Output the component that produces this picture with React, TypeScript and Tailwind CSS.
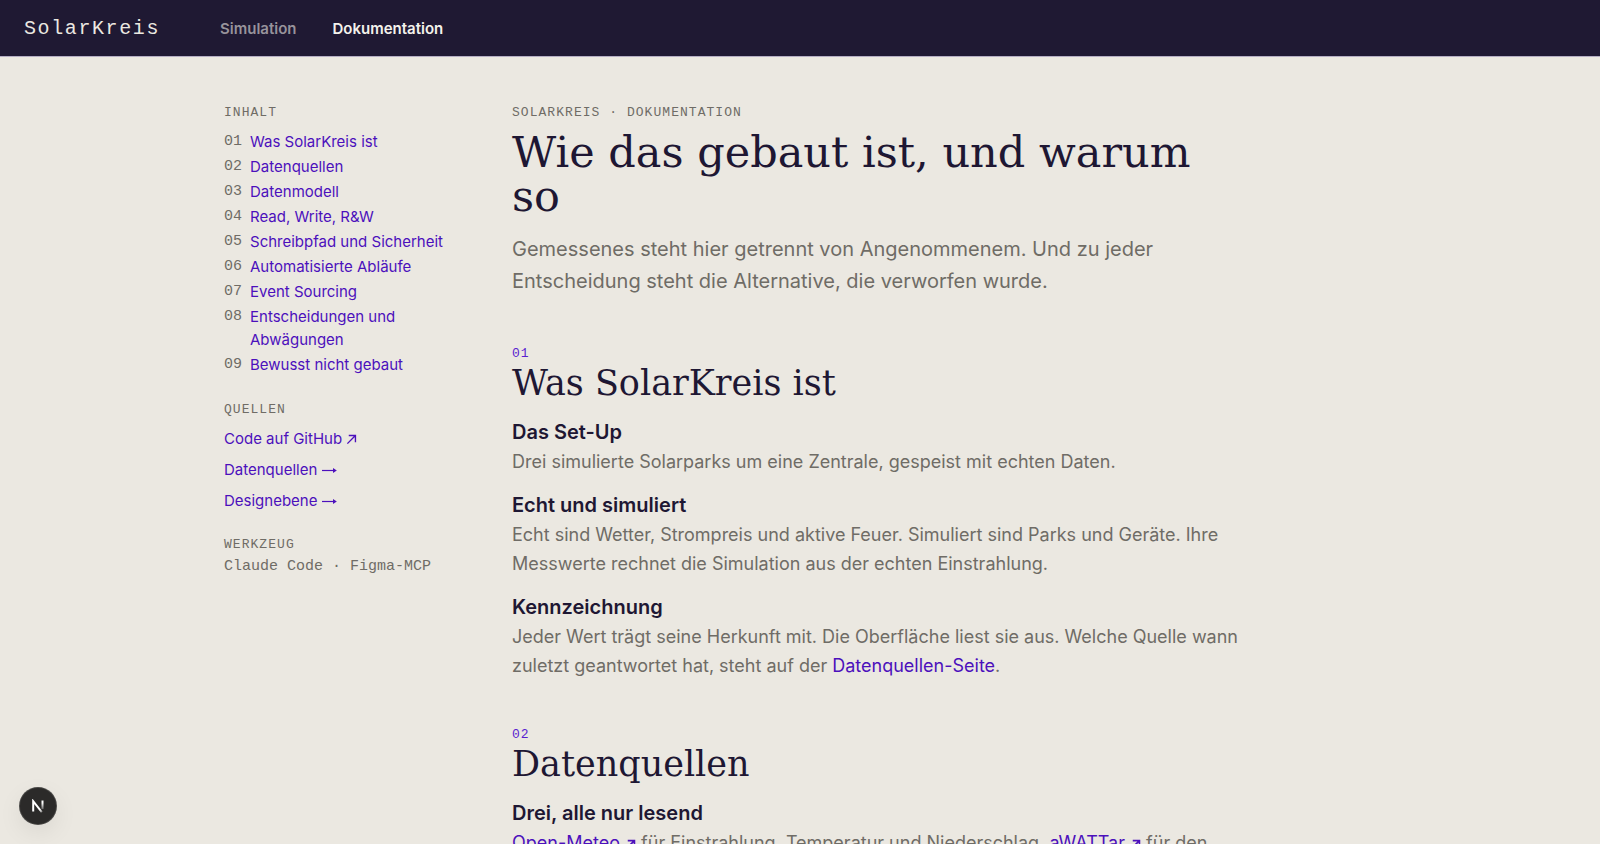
import React from 'react';

const sans = "font-['Inter','Liberation_Sans',sans-serif]";
const mono = "font-['Liberation_Mono',monospace]";
const serif = "font-['DejaVu_Serif',serif]";

const toc = [
  'Was SolarKreis ist',
  'Datenquellen',
  'Datenmodell',
  'Read, Write, R&W',
  'Schreibpfad und Sicherheit',
  'Automatisierte Abläufe',
  'Event Sourcing',
  'Entscheidungen und Abwägungen',
  'Bewusst nicht gebaut',
];

const pad = (n: number) => String(n).padStart(2, '0');

const ArrowUpRight = ({ bold = false }: { bold?: boolean }) => (
  <svg viewBox="0 0 12 12" className="inline-block w-[11px] h-[11px]" fill="none" stroke="currentColor" strokeWidth={bold ? 1.8 : 1.5} aria-hidden="true">
    <path d="M1.5 10.5 10 2M3 1.7h7.3V9" />
  </svg>
);

const ArrowRight = () => (
  <svg viewBox="0 0 15 10" className="inline-block w-[15px] h-[10px]" fill="none" stroke="currentColor" strokeWidth="1.2" aria-hidden="true">
    <path d="M0 4.5H13" />
    <path d="M11 2 14.8 4.5 11 7z" fill="currentColor" stroke="none" />
  </svg>
);

const Label = ({ children }: { children: React.ReactNode }) => (
  <p className={`${mono} text-[13px] leading-5 tracking-[0.08em] uppercase text-[#6f6c66]`}>{children}</p>
);

const Section = ({ no, title, children }: { no: number; title: string; children: React.ReactNode }) => (
  <section id={`s${pad(no)}`} className="mt-[45px]">
    <p className={`${mono} text-[13px] leading-5 tracking-[0.08em] text-[#5a1fd0]`}>{pad(no)}</p>
    <h2 className={`${serif} text-[35px] leading-[39px] text-[#1e1733]`}>{title}</h2>
    {children}
  </section>
);

const Block = ({ title, children }: { title: string; children: React.ReactNode }) => (
  <div className="mt-[15px]">
    <h3 className="text-xl leading-7 font-semibold text-[#1e1733]">{title}</h3>
    <p className="mt-px text-lg leading-[29px] text-[#6f6c66]">{children}</p>
  </div>
);

const A = ({ href, children }: { href: string; children: React.ReactNode }) => (
  <a href={href} className="text-[#4c10bc] hover:underline">{children}</a>
);

const App: React.FC = () => {
  return (
    <div className={`${sans} min-h-screen bg-[#ebe8e1] text-[#1e1733]`}>

      {/* Header */}
      <header className="flex items-center gap-15 h-[57px] px-6 pt-0.5 bg-[#1f1933] border-b border-[#b5aec4]">
        <a href="#" className={`${mono} text-xl tracking-[0.08em] text-[#ebe8e1]`}>SolarKreis</a>
        <nav className="flex gap-9 text-[15px] leading-6 font-semibold">
          <a href="#simulation" className="text-[#97939b]">Simulation</a>
          <a href="#doku" className="text-[#f4f2ec]">Dokumentation</a>
        </nav>
      </header>

      <div className="max-w-6xl mx-auto pt-[46px] flex items-start gap-12">

        {/* Sidebar */}
        <aside className="w-60 shrink-0 text-[15px] leading-[23px]">
          <Label>Inhalt</Label>
          <ol className="mt-[7px] space-y-0.5">
            {toc.map((t, i) => (
              <li key={t} className="flex gap-2">
                <span className={`${mono} text-[#6f6c66]`}>{pad(i + 1)}</span>
                <A href={`#s${pad(i + 1)}`}>{t}</A>
              </li>
            ))}
          </ol>

          <div className="mt-6">
            <Label>Quellen</Label>
            <ul className="mt-[7px] space-y-2">
              <li><A href="#github">Code auf GitHub <ArrowUpRight /></A></li>
              <li><A href="#quellen">Datenquellen <ArrowRight /></A></li>
              <li><A href="#design">Designebene <ArrowRight /></A></li>
            </ul>
          </div>

          <div className="mt-[23px]">
            <Label>Werkzeug</Label>
            <p className={`${mono} text-[#6f6c66]`}>Claude Code · Figma-MCP</p>
          </div>
        </aside>

        {/* Content */}
        <main className="flex-1 max-w-[728px]">
          <Label>SolarKreis · Dokumentation</Label>
          <h1 className={`${serif} mt-[7px] text-[43px] leading-[44px] text-[#1e1733]`}>Wie das gebaut ist, und warum so</h1>
          <p className="mt-[15px] pb-0.5 max-w-[660px] text-xl leading-8 text-[#6f6c66]">
            Gemessenes steht hier getrennt von Angenommenem. Und zu jeder Entscheidung steht die Alternative, die verworfen wurde.
          </p>

          <Section no={1} title="Was SolarKreis ist">
            <Block title="Das Set-Up">
              Drei simulierte Solarparks um eine Zentrale, gespeist mit echten Daten.
            </Block>
            <Block title="Echt und simuliert">
              Echt sind Wetter, Strompreis und aktive Feuer. Simuliert sind Parks und Geräte. Ihre Messwerte rechnet die Simulation aus der echten Einstrahlung.
            </Block>
            <Block title="Kennzeichnung">
              Jeder Wert trägt seine Herkunft mit. Die Oberfläche liest sie aus. Welche Quelle wann zuletzt geantwortet hat, steht auf der <A href="#quellen">Datenquellen-Seite</A>.
            </Block>
          </Section>

          <Section no={2} title="Datenquellen">
            <Block title="Drei, alle nur lesend">
              <A href="#open-meteo">Open-Meteo <ArrowUpRight bold /></A> für Einstrahlung, Temperatur und Niederschlag, <A href="#awattar">aWATTar <ArrowUpRight bold /></A> für den
            </Block>
          </Section>
        </main>
      </div>

      {/* Dev badge */}
      <button aria-label="Open Next.js Dev Tools" className="fixed left-5 bottom-5 size-9 rounded-full bg-[#2b2a29] ring-1 ring-[#4a4947] shadow-[0_8px_24px_rgba(0,0,0,0.08)] flex items-center justify-center">
        <svg viewBox="0 0 14 14" className="w-3.5 h-3.5" fill="none" strokeWidth="2" aria-hidden="true">
          <defs>
            <linearGradient id="n-diag" x1="4" y1="4" x2="13" y2="14" gradientUnits="userSpaceOnUse">
              <stop offset="0.6" stopColor="#fff" />
              <stop offset="1" stopColor="#fff" stopOpacity="0.1" />
            </linearGradient>
            <linearGradient id="n-stem" x1="11" y1="1" x2="11" y2="11" gradientUnits="userSpaceOnUse">
              <stop offset="0.3" stopColor="#fff" />
              <stop offset="1" stopColor="#fff" stopOpacity="0.2" />
            </linearGradient>
          </defs>
          <path d="M2.2 12.5V2.2l8.6 11" stroke="url(#n-diag)" />
          <path d="M11.5 1.5v8.6" stroke="url(#n-stem)" />
        </svg>
      </button>
    </div>
  );
};
export default App;
